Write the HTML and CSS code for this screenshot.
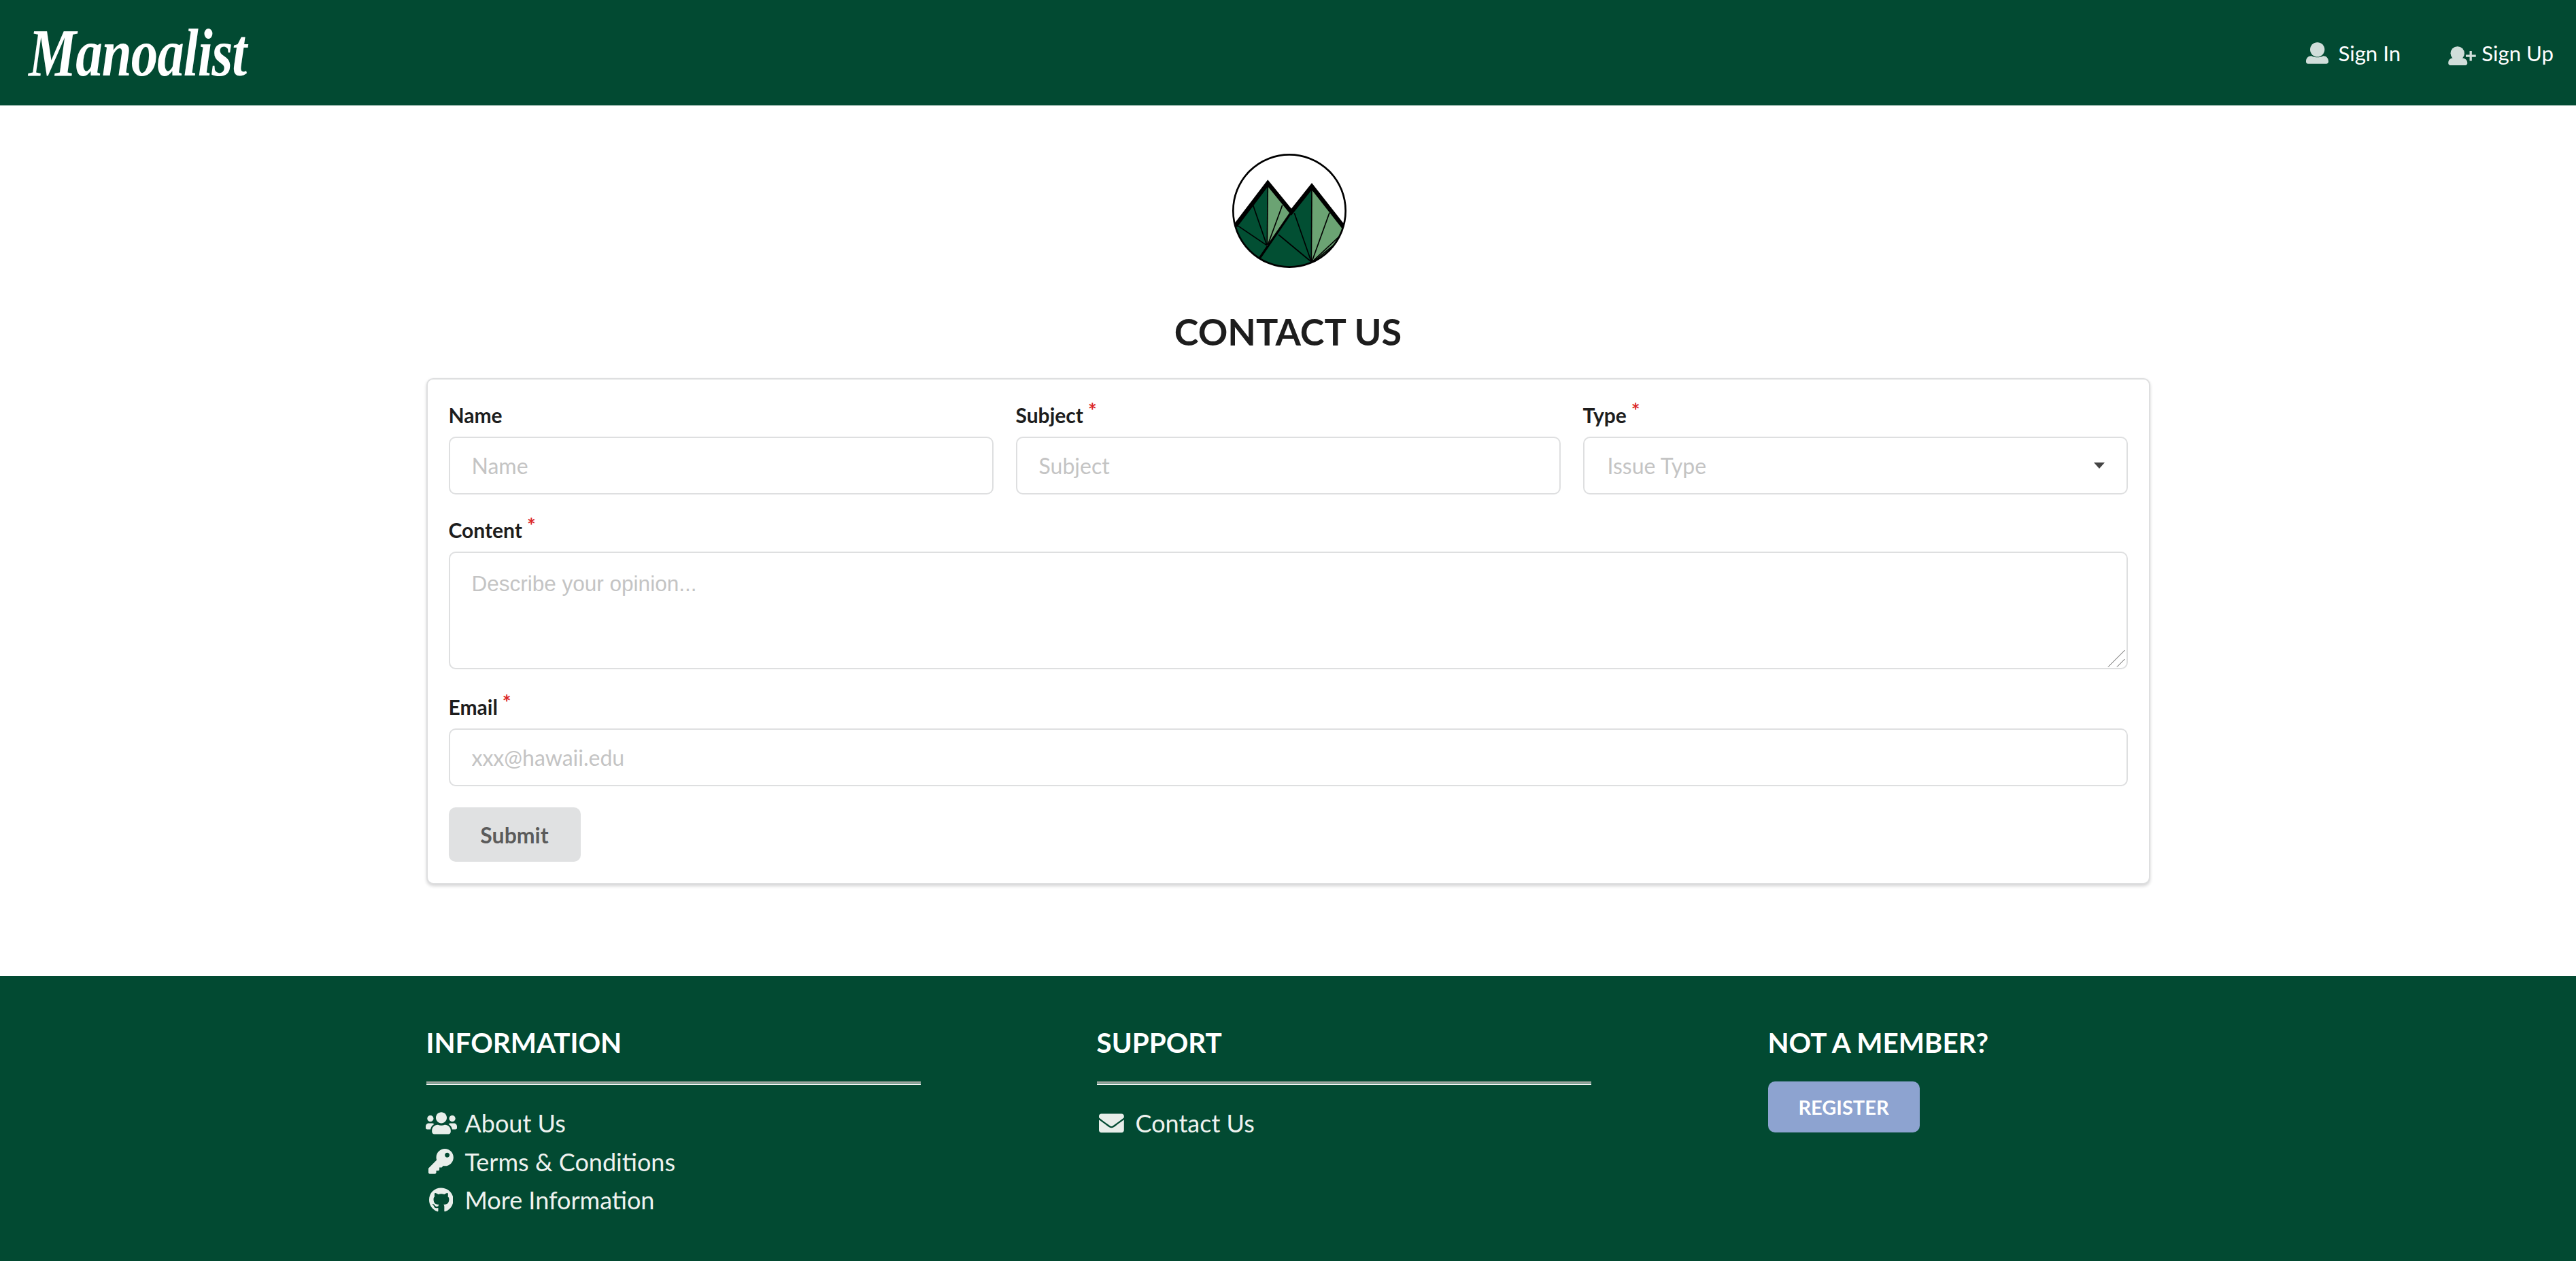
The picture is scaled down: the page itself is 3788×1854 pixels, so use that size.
FILE: index.html
```html
<!DOCTYPE html>
<html lang="en">
<head>
<meta charset="utf-8">
<title>Manoalist</title>
<link rel="stylesheet" href="styles.css">
</head>
<body>
<header class="topbar">
  <a class="brand">Manoalist</a>
  <nav class="account">
    <a class="account-link">
      <svg class="ico-user" viewBox="157 120 99 95"><circle cx="207" cy="152" r="32"/><path d="M157 204c0-14 9-24 24-24 8 4 17 6 26 6s18-2 26-6c14 0 23 10 23 24v2c0 5-4 9-9 9h-81c-5 0-9-4-9-9z"/></svg>
      <span>Sign In</span>
    </a>
    <a class="account-link account-link-tight">
      <svg class="ico-userplus" viewBox="785 140 123 85"><circle cx="826" cy="172" r="31"/><path d="M785 214c0-13 9-22 22-22 6 3 12 4 19 4s13-1 19-4c14 0 25 9 25 22v2c0 5-4 9-9 9h-67c-5 0-9-4-9-9z"/><path d="M880 161h10v17h18v10h-18v17h-10v-17h-17v-10h17z"/></svg>
      <span>Sign Up</span>
    </a>
  </nav>
</header>

<main class="page">
  <div class="emblem">
    <svg class="emblem-art" viewBox="0 0 750 600">
      <defs><clipPath id="disc"><circle cx="378" cy="300" r="248"/></clipPath></defs>
      <g clip-path="url(#disc)">
        <path class="tone-dark" d="M283 178L130 380V560H280L280 450Z"/>
        <path class="tone-light" d="M283 178L392 312L280 450Z"/>
        <path class="tone-dark" d="M477 190L387 305L230 530L478 570Z"/>
        <path class="tone-light" d="M477 190L640 400V570H476Z"/>
        <g class="line-thin">
          <path d="M283 185L280 450"/>
          <path d="M218 275L278 450"/>
          <path d="M347 275L284 447"/>
          <path d="M145 362L278 452"/>
          <path d="M477 195L475 525"/>
          <path d="M400 310L475 525"/>
          <path d="M330 405L475 525"/>
          <path d="M555 308L478 522"/>
          <path d="M612 400L478 525"/>
          <path d="M606 425L480 527"/>
        </g>
        <path class="line-mid" d="M387 305L248 507"/>
        <path class="line-bold" d="M140 366L283 178L387 305L477 192L618 372"/>
      </g>
      <circle class="ring" cx="378" cy="300" r="248"/>
    </svg>
  </div>
  <h1 class="page-title">CONTACT US</h1>

  <form class="card">
    <div class="row-three">
      <div class="field">
        <label class="field-label">Name</label>
        <input class="control" type="text" placeholder="Name">
      </div>
      <div class="field">
        <label class="field-label required">Subject</label>
        <input class="control" type="text" placeholder="Subject">
      </div>
      <div class="field">
        <label class="field-label required">Type</label>
        <div class="control select-box"><span class="select-text">Issue Type</span><i class="caret"></i></div>
      </div>
    </div>
    <div class="field">
      <label class="field-label required">Content</label>
      <div class="area-wrap">
        <textarea class="control area" placeholder="Describe your opinion..."></textarea>
        <svg class="grip" viewBox="0 0 26 26"><path class="grip-line" d="M1 25.500L25.500 1M14 25.500L25.500 14"/></svg>
      </div>
    </div>
    <div class="field">
      <label class="field-label required">Email</label>
      <input class="control" type="text" placeholder="xxx@hawaii.edu">
    </div>
    <button class="submit" type="button">Submit</button>
  </form>
</main>

<footer class="site-footer">
  <div class="footer-grid">
    <section class="footer-col">
      <h4 class="footer-title">INFORMATION</h4>
      <div class="rule"></div>
      <ul class="footer-links">
        <li><span class="slot"><svg viewBox="0 0 640 512"><path d="M96 224c35.300 0 64-28.700 64-64s-28.700-64-64-64-64 28.700-64 64 28.700 64 64 64zm448 0c35.300 0 64-28.700 64-64s-28.700-64-64-64-64 28.700-64 64 28.700 64 64 64zm32 32h-64c-17.600 0-33.500 7.100-45.100 18.600 40.300 22.100 68.900 62 75.100 109.400h66c17.700 0 32-14.300 32-32v-32c0-35.300-28.700-64-64-64zm-256 0c61.900 0 112-50.100 112-112S381.900 32 320 32 208 82.100 208 144s50.100 112 112 112zm76.800 32h-8.300c-20.800 10-43.900 16-68.500 16s-47.600-6-68.500-16h-8.300C179.600 288 128 339.600 128 403.200V432c0 26.500 21.500 48 48 48h288c26.500 0 48-21.500 48-48v-28.800c0-63.600-51.600-115.200-115.200-115.200zm-223.700-13.400C161.500 263.100 145.600 256 128 256H64c-35.300 0-64 28.700-64 64v32c0 17.700 14.300 32 32 32h65.900c6.300-47.400 34.900-87.300 75.200-109.400z"/></svg></span>About Us</li>
        <li><span class="slot"><svg viewBox="0 0 512 512"><path d="M512 176.001C512 273.203 433.202 352 336 352c-11.220 0-22.190-1.062-32.827-3.069l-24.012 27.014A23.999 23.999 0 0 1 261.223 384H224v40c0 13.255-10.745 24-24 24h-40v40c0 13.255-10.745 24-24 24H24c-13.255 0-24-10.745-24-24v-78.059c0-6.365 2.529-12.470 7.029-16.971l161.802-161.802C163.108 213.814 160 195.271 160 176 160 78.798 238.797.001 335.999 0 433.488-.001 512 78.511 512 176.001zM336 128c0 26.510 21.490 48 48 48s48-21.490 48-48-21.490-48-48-48-48 21.490-48 48z"/></svg></span>Terms &amp; Conditions</li>
        <li><span class="slot"><svg viewBox="0 0 496 512"><path d="M244.800 8C106.100 8 0 113.300 0 252c0 110.900 69.800 205.800 169.500 239.200 12.800 2.300 17.300-5.600 17.300-12.100 0-6.200-.3-40.400-.3-61.400 0 0-70 15-84.700-29.800 0 0-11.400-29.100-27.800-36.600 0 0-22.900-15.700 1.600-15.400 0 0 24.900 2 38.600 25.800 21.900 38.600 58.600 27.500 72.900 20.900 2.300-16 8.800-27.100 16-33.700-55.900-6.200-112.300-14.300-112.300-110.500 0-27.500 7.600-41.300 23.600-58.900-2.600-6.500-11.100-33.300 2.600-67.900 20.900-6.500 69 27 69 27 20-5.600 41.500-8.500 62.800-8.500s42.800 2.900 62.800 8.500c0 0 48.100-33.600 69-27 13.700 34.700 5.200 61.400 2.600 67.900 16 17.700 25.800 31.500 25.800 58.900 0 96.500-58.900 104.200-114.800 110.500 9.200 7.900 17 22.900 17 46.400 0 33.700-.3 75.400-.3 83.600 0 6.500 4.600 14.400 17.300 12.100C428.200 457.800 496 362.900 496 252 496 113.300 383.500 8 244.800 8z"/></svg></span>More Information</li>
      </ul>
    </section>
    <section class="footer-col">
      <h4 class="footer-title">SUPPORT</h4>
      <div class="rule"></div>
      <ul class="footer-links">
        <li><span class="slot"><svg viewBox="0 0 512 512"><path d="M502.300 190.800c3.900-3.100 9.700-.2 9.700 4.700V400c0 26.500-21.500 48-48 48H48c-26.500 0-48-21.500-48-48V195.600c0-5 5.700-7.800 9.700-4.700 22.400 17.400 52.100 39.500 154.100 113.600 21.100 15.400 56.700 47.800 92.200 47.600 35.700.3 72-32.800 92.300-47.600 102-74.100 131.600-96.300 154-113.700zM256 320c23.200.4 56.600-29.200 73.400-41.400 132.700-96.300 142.800-104.700 173.400-128.700 5.800-4.500 9.200-11.500 9.200-18.900v-19c0-26.500-21.500-48-48-48H48C21.500 64 0 85.500 0 112v19c0 7.400 3.400 14.300 9.200 18.900 30.600 23.900 40.700 32.400 173.400 128.700 16.800 12.200 50.200 41.800 73.400 41.400z"/></svg></span>Contact Us</li>
      </ul>
    </section>
    <section class="footer-col footer-col-last">
      <h4 class="footer-title">NOT A MEMBER?</h4>
      <button class="register" type="button">REGISTER</button>
    </section>
  </div>
</footer>
</body>
</html>
```
FILE: styles.css
```css
* { box-sizing: border-box; }
html, body { margin: 0; padding: 0; }
body {
  font-family: Lato, "Noto Sans", sans-serif;
  font-size: 33.6px;
  color: #1d1d1d;
  background: #fff;
  display: flex;
  flex-direction: column;
  height: 1854px;
  overflow: hidden;
}

.topbar {
  height: 155px;
  flex: none;
  background: #024a32;
  display: flex;
  align-items: center;
  justify-content: space-between;
  padding: 0 33px 0 42px;
}
.brand {
  font-family: "Liberation Serif", serif;
  font-style: italic;
  font-weight: 700;
  font-size: 79px;
  line-height: 1;
  color: #fff;
  letter-spacing: -1px;
  transform: scaleY(1.25);
}
.account { display: flex; align-items: center; gap: 70px; }
.account-link {
  display: flex;
  align-items: center;
  gap: 14px;
  color: #fff;
  font-size: 31.2px;
}
.account-link-tight { gap: 8px; }
.account-link svg { fill: #fff; opacity: .82; }
.ico-user { width: 33px; height: 32px; }
.ico-userplus { width: 41px; height: 28px; margin-top: 8px; }

.page { flex: 1; display: flex; flex-direction: column; align-items: center; }
.emblem { margin-top: 55px; padding-left: 2px; height: 200px; }
.emblem-art { display: block; width: 250px; height: 200px; }
.tone-dark { fill: #024f33; }
.tone-light { fill: #6ba373; }
.line-thin { fill: none; stroke: #000; stroke-width: 5; }
.line-mid { fill: none; stroke: #000; stroke-width: 10; }
.line-bold { fill: none; stroke: #000; stroke-width: 19; }
.ring { fill: none; stroke: #000; stroke-width: 8; }

.page-title {
  margin: 44px 0 33.5px;
  font-size: 54px;
  line-height: 68px;
  font-weight: 700;
  color: #1d1d1d;
}

.card {
  width: 2535px;
  height: 744px;
  background: #fff;
  border: 2.4px solid #dedfe0;
  border-radius: 10px;
  box-shadow: 0 2.4px 4px rgba(34,36,38,.18);
  padding: 34.5px 31px 30px;
}
.row-three {
  display: grid;
  grid-template-columns: repeat(3, 1fr);
  gap: 33px;
}
.field { margin-bottom: 34px; display: flex; flex-direction: column; }
.field-label {
  height: 37px;
  line-height: 37px;
  margin-bottom: 13px;
  font-size: 30px;
  font-weight: 700;
  color: #1d1d1d;
}
.required::after {
  content: "*";
  color: #db2828;
  margin-left: 7px;
  position: relative;
  top: -7px;
}
.control {
  width: 100%;
  height: 85px;
  border: 2.4px solid #dedfe0;
  border-radius: 10px;
  padding: 0 32px;
  font-family: Lato, sans-serif;
  font-size: 32px;
  background: #fff;
  color: #1d1d1d;
  outline: none;
}
.control::placeholder { color: #c4c4c4; opacity: 1; }
.area-wrap { position: relative; margin-bottom: 3px; }
.area {
  display: block;
  height: 173px;
  padding: 25px 32px;
  font-family: "Liberation Sans", Arial, sans-serif;
  font-size: 31.5px;
  line-height: 40px;
  resize: none;
}
.grip { position: absolute; right: 4px; bottom: 3px; width: 26px; height: 26px; }
.grip-line { fill: none; stroke: #555; stroke-width: 1; }
.select-box { display: flex; align-items: center; justify-content: space-between; padding-right: 32px; }
.select-text { color: #c4c4c4; padding-left: 2px; }
.caret {
  width: 0;
  height: 0;
  border-left: 8px solid transparent;
  border-right: 8px solid transparent;
  border-top: 9px solid #444;
}
.submit {
  display: block;
  width: 194px;
  height: 80px;
  margin-top: -3px;
  border: 0;
  border-radius: 10px;
  background: #e0e1e2;
  color: rgba(0,0,0,.62);
  font-family: Lato, sans-serif;
  font-size: 32px;
  font-weight: 700;
}

.site-footer {
  height: 419px;
  flex: none;
  background: #024a32;
  color: #fff;
  padding-top: 73px;
}
.footer-grid {
  width: 2535px;
  margin: 0 auto;
  display: grid;
  grid-template-columns: 986px 987px 1fr;
}
.footer-col { width: 727px; }
.footer-title {
  margin: 0;
  font-size: 40.4px;
  line-height: 50px;
  font-weight: 700;
  color: #fff;
}
.rule {
  margin-top: 32px;
  height: 5px;
  border-top: 2.5px solid #a3a9a3;
  border-bottom: 2.5px solid #f2f4f2;
}
.footer-links {
  list-style: none;
  margin: 28px 0 0;
  padding: 0;
  font-size: 36px;
  line-height: 56.5px;
  color: #eef2ef;
}
.footer-links li { display: flex; align-items: center; }
.slot { width: 44px; margin-right: 13px; display: flex; justify-content: center; }
.slot svg { height: 36.8px; width: auto; fill: #e8eeea; flex: none; }
.register {
  display: block;
  width: 223px;
  height: 75px;
  margin-top: 32px;
  border: 0;
  border-radius: 10px;
  background: #8da3d0;
  color: #fff;
  font-family: Lato, sans-serif;
  font-size: 29px;
  font-weight: 700;
}
```
